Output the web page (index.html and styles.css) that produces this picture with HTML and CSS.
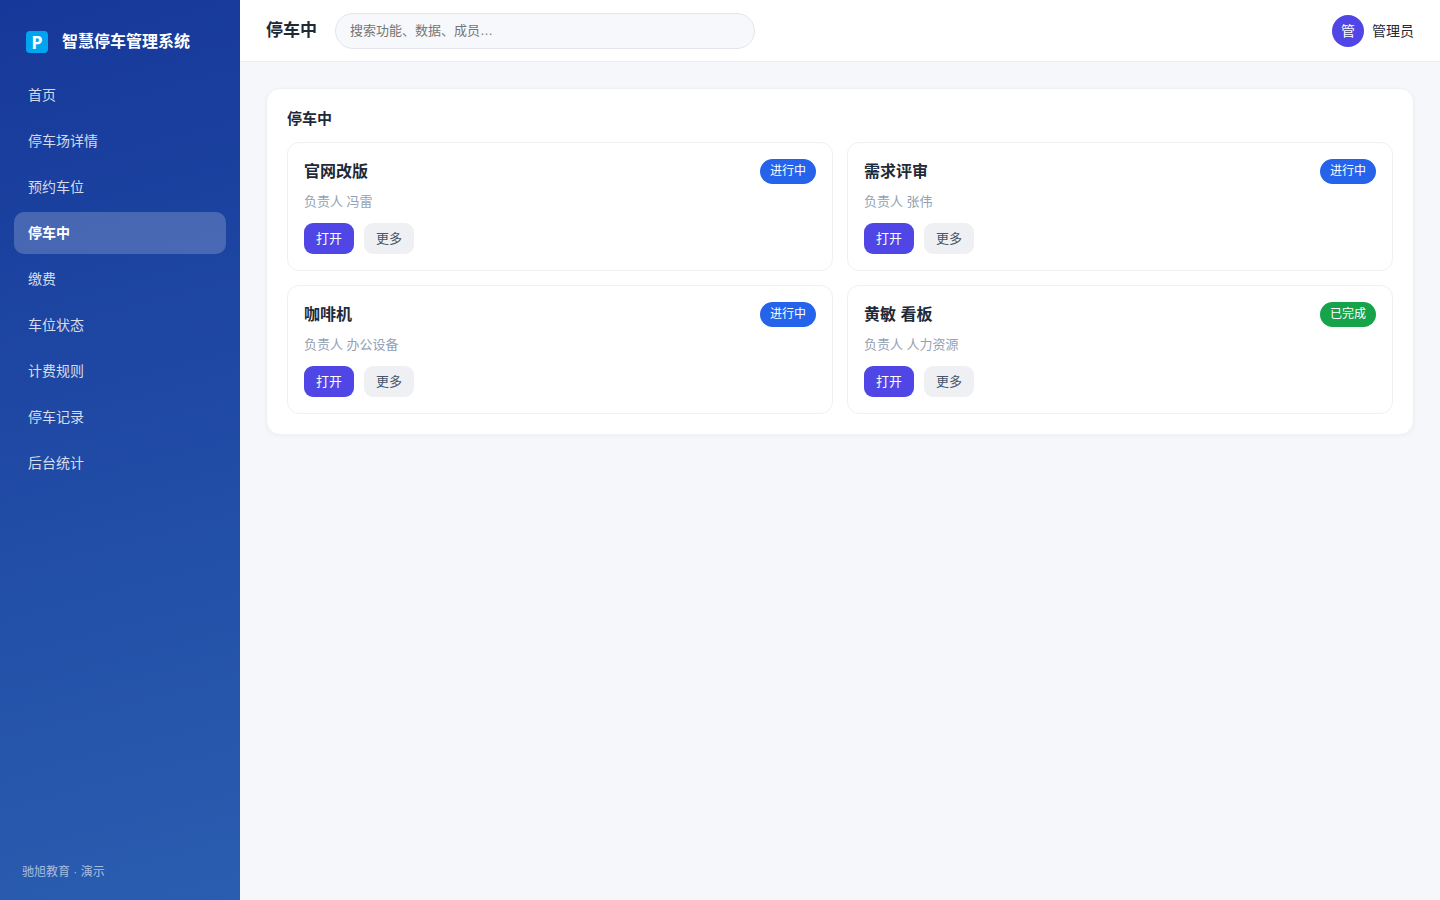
FILE: index.html
```html
<!DOCTYPE html>
<html lang="zh-CN">
<head>
  <meta charset="UTF-8" />
  <meta name="viewport" content="width=device-width, initial-scale=1.0" />
  <title>智慧停车管理系统</title>
  <link rel="stylesheet" href="styles.css">
</head>
<body>
  <div class="app">
    <aside class="sidebar">
      <div class="brand">
        <span class="logo">P</span>
        <span>智慧停车管理系统</span>
      </div>
      <nav class="menu">
        <a href="#home">首页</a>
        <a href="#detail">停车场详情</a>
        <a href="#reserve">预约车位</a>
        <a href="#parking" class="active">停车中</a>
        <a href="#pay">缴费</a>
        <a href="#status">车位状态</a>
        <a href="#rules">计费规则</a>
        <a href="#records">停车记录</a>
        <a href="#stats">后台统计</a>
      </nav>
      <div class="sidebar-foot">驰旭教育 · 演示</div>
    </aside>

    <div class="main">
      <header class="topbar">
        <h1>停车中</h1>
        <input class="search" type="search" aria-label="搜索" placeholder="搜索功能、数据、成员…" />
        <div class="user">
          <span class="avatar">管</span>
          <span>管理员</span>
        </div>
      </header>

      <main class="content">
        <section class="panel">
          <h2>停车中</h2>
          <div class="cards">
            <article class="card">
              <div class="card-head">
                <h3>官网改版</h3>
                <span class="badge">进行中</span>
              </div>
              <p>负责人 冯雷</p>
              <div class="actions">
                <button class="btn primary">打开</button>
                <button class="btn">更多</button>
              </div>
            </article>
            <article class="card">
              <div class="card-head">
                <h3>需求评审</h3>
                <span class="badge">进行中</span>
              </div>
              <p>负责人 张伟</p>
              <div class="actions">
                <button class="btn primary">打开</button>
                <button class="btn">更多</button>
              </div>
            </article>
            <article class="card">
              <div class="card-head">
                <h3>咖啡机</h3>
                <span class="badge">进行中</span>
              </div>
              <p>负责人 办公设备</p>
              <div class="actions">
                <button class="btn primary">打开</button>
                <button class="btn">更多</button>
              </div>
            </article>
            <article class="card">
              <div class="card-head">
                <h3>黄敏 看板</h3>
                <span class="badge done">已完成</span>
              </div>
              <p>负责人 人力资源</p>
              <div class="actions">
                <button class="btn primary">打开</button>
                <button class="btn">更多</button>
              </div>
            </article>
          </div>
        </section>
      </main>
    </div>
  </div>
</body>
</html>
```
FILE: styles.css
```css
* {
  margin: 0;
  padding: 0;
  box-sizing: border-box;
}
body {
  font-family: "Liberation Sans", "Noto Sans CJK SC", sans-serif;
  font-size: 14px;
  line-height: 20px;
  color: #1f2937;
  background: #f5f7fb;
}
.app {
  display: flex;
  min-height: 100vh;
}

/* sidebar */
.sidebar {
  width: 240px;
  flex-shrink: 0;
  display: flex;
  flex-direction: column;
  padding: 20px 14px;
  color: #fff;
  background: linear-gradient(165deg, #16389a, #2a5db0);
}
.brand {
  display: flex;
  align-items: center;
  gap: 14px;
  height: 44px;
  padding: 0 12px;
  margin-bottom: 10px;
  font-size: 16px;
  font-weight: bold;
}
.logo {
  width: 22px;
  height: 22px;
  border-radius: 4px;
  background: #00a4ef;
  font-family: "Open Sans", sans-serif;
  font-size: 18px;
  line-height: 22px;
  text-align: center;
}
.menu {
  display: flex;
  flex-direction: column;
  gap: 4px;
}
.menu a {
  padding: 11px 14px;
  border-radius: 10px;
  color: rgba(255, 255, 255, 0.82);
  text-decoration: none;
}
.menu a.active {
  background: rgba(255, 255, 255, 0.2);
  color: #fff;
  font-weight: bold;
}
.sidebar-foot {
  margin-top: auto;
  padding: 0 8px;
  font-size: 12px;
  line-height: 16px;
  color: rgba(255, 255, 255, 0.6);
}

/* top bar */
.main {
  flex: 1;
  min-width: 0;
}
.topbar {
  display: flex;
  align-items: center;
  gap: 18px;
  height: 62px;
  padding: 0 26px;
  background: #fff;
  border-bottom: 1px solid #eceef3;
}
.topbar h1 {
  font-size: 17px;
  white-space: nowrap;
}
.search {
  flex: 0 1 420px;
  min-width: 0;
  height: 36px;
  padding: 0 14px;
  border: 1px solid #e2e5ec;
  border-radius: 18px;
  background: #f7f8fc;
  font-family: inherit;
  font-size: 13px;
  outline: none;
  appearance: none;
}
.search::placeholder {
  color: #757575;
}
.user {
  display: flex;
  align-items: center;
  gap: 8px;
  margin-left: auto;
  white-space: nowrap;
}
.avatar {
  width: 32px;
  height: 32px;
  border-radius: 50%;
  background: #4f46e5;
  color: #fff;
  line-height: 32px;
  text-align: center;
}

/* content */
.content {
  padding: 26px;
}
.panel {
  padding: 20px;
  background: #fff;
  border: 1px solid #eff1f5;
  border-radius: 14px;
  box-shadow: 0 1px 4px rgba(15, 23, 42, 0.04);
}
.panel h2 {
  margin-bottom: 13px;
  font-size: 15px;
}
.cards {
  display: grid;
  grid-template-columns: 1fr 1fr;
  gap: 14px;
}
.card {
  padding: 16px;
  border: 1px solid #eef0f4;
  border-radius: 12px;
}
.card-head {
  display: flex;
  align-items: center;
  justify-content: space-between;
}
.card h3 {
  font-size: 16px;
}
.badge {
  padding: 0 10px;
  border-radius: 13px;
  background: #2563eb;
  color: #fff;
  font-size: 12px;
  line-height: 25px;
}
.badge.done {
  background: #16a34a;
}
.card p {
  margin: 8px 0 11px;
  font-size: 13px;
  color: #94a0b3;
}
.actions {
  display: flex;
  gap: 10px;
}
.btn {
  padding: 0 12px;
  border: none;
  border-radius: 9px;
  background: #eef0f4;
  color: #475569;
  font-family: inherit;
  font-size: 13px;
  line-height: 31px;
  cursor: pointer;
}
.btn.primary {
  background: #4f46e5;
  color: #fff;
}
```
